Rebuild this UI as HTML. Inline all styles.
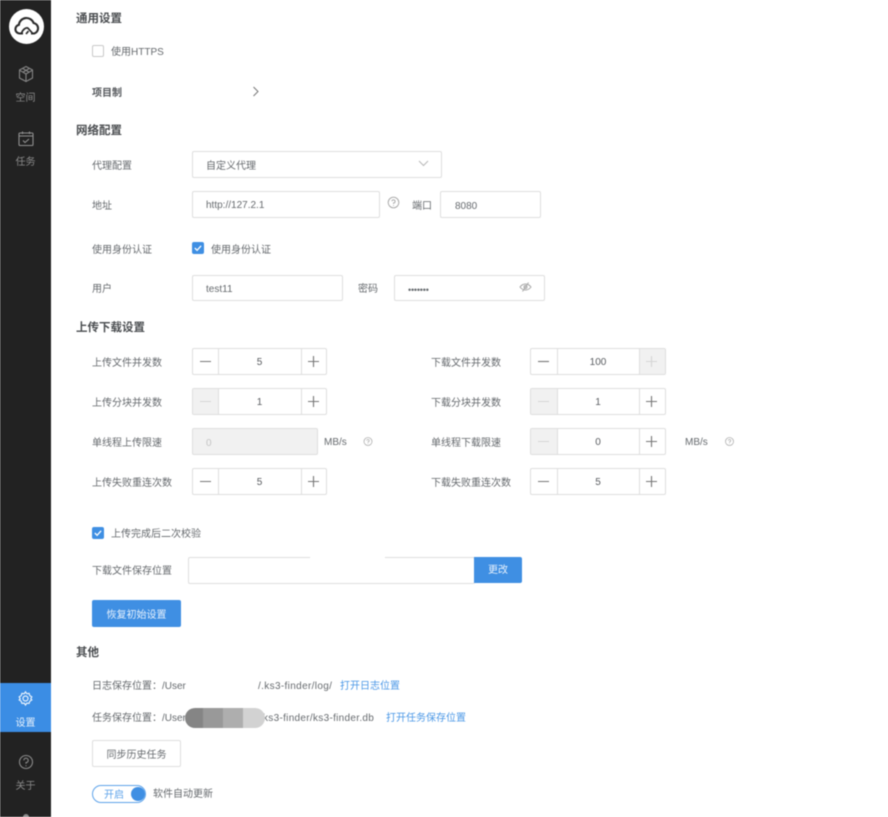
<!DOCTYPE html>
<html lang="zh">
<head>
<meta charset="utf-8">
<style>
html,body{margin:0;padding:0;background:#fff}
body{width:888px;height:817px;overflow:hidden;position:relative;font-family:"Liberation Sans","Noto Sans CJK SC",sans-serif;font-size:10px;color:#666a6e}
#page{position:absolute;left:0;top:0;width:888px;height:817px;overflow:hidden;filter:blur(.5px)}
#page div,#page span.a,#page svg{position:absolute}
.t{white-space:nowrap;line-height:14px;height:14px;margin-top:2px}
.h{white-space:nowrap;font-size:11.5px;font-weight:700;color:#4a4d50;line-height:16px;left:76px;margin-top:1px}
.b{box-sizing:border-box;border:1.5px solid #dedede;border-radius:2px;background:#fff}
.d{background:#f1f1f1}
.ct{text-align:center;line-height:28px;color:#5a5d61}
.side{left:0;width:51px;text-align:center;color:#8b8b8b;line-height:14px;font-size:10px}
.btn{text-align:center;line-height:24px}
.ck{box-sizing:border-box;width:12px;height:12px;border-radius:2px;background:#3f8fe3}
</style>
</head>
<body>
<div id="page">
<div style="left:-4px;top:-4px;width:55px;height:825px;background:#222"></div>
<div style="left:9px;top:9px;width:35px;height:35px;border-radius:50%;background:#fff"></div>
<svg style="left:9px;top:9px" width="35" height="35" viewBox="0 0 35 35" fill="none" stroke="#2a2a2a" stroke-width="2.1"><path d="M14 24.5H10.5a4.4 4.4 0 0 1-.6-8.7A7.6 7.6 0 0 1 24.6 14a5.4 5.4 0 0 1 .6 10.5H22"/><path d="M12.5 24c1.5-3.8 5-6 6.5-4.8l5 5.6M17 25l2.5-3" stroke-width="1.7"/></svg>
<svg style="left:17px;top:65px" width="18" height="18" viewBox="0 0 18 18" fill="none" stroke="#858585" stroke-width="1.1"><path d="M9 1.5 15.5 5v8L9 16.5 2.5 13V5ZM2.5 5.2 9 9l6.5-3.8M9 9v7.5M5.500 3.400l6.500 3.700M12.500 3.400 6 7.100"/></svg>
<div class="side t" style="top:90px">空间</div>
<svg style="left:17px;top:130px" width="18" height="18" viewBox="0 0 18 18" fill="none" stroke="#909090" stroke-width="1.1"><rect x="2" y="3" width="14" height="12.500" rx="1"/><path d="M2 6h14M5.500 1.500v2.500M12.500 1.500v2.500M6 10.500l2 2 4-3.500"/></svg>
<div class="side t" style="top:154px">任务</div>
<div style="left:-4px;top:683px;width:55px;height:49px;background:#3b8de4"></div>
<svg style="left:17px;top:690px" width="17" height="17" viewBox="0 0 17 17" fill="none" stroke="#e8f2fd" stroke-width="1.200"><path d="M8.500 1.800l1.300 1.900 2.300-.3.700 2.200 2 1.200-1 2.100 1 1-2 1.300-.7 2.200-2.300-.3-1.300 1.900-1.300-1.900-2.300.3-.7-2.200-2-1.300 1-1-1-2.100 2-1.200.7-2.200 2.300.3Z"/><circle cx="8.500" cy="8.500" r="2.500"/></svg>
<div class="side t" style="top:715px;color:#e8f2fd">设置</div>
<svg style="left:18px;top:754px" width="16" height="16" viewBox="0 0 16 16" fill="none" stroke="#8b8b8b" stroke-width="1.100"><circle cx="8" cy="8" r="6.500"/><path d="M5.800 6.300A2.200 2.200 0 1 1 8 8.600v1.200M8 11.200v1"/></svg>
<div class="side t" style="top:778px">关于</div>
<div style="left:23px;top:814px;width:6px;height:6px;border-radius:50%;background:#8b8b8b"></div>

<div class="h" style="top:10px">通用设置</div>
<div class="b" style="left:92px;top:45px;width:12px;height:12px;border-color:#c9c9c9"></div>
<div class="t" style="left:111px;top:44px">使用HTTPS</div>
<div class="t" style="left:92px;top:85px;font-weight:700;color:#55585c">项目制</div>
<svg style="left:252px;top:86px" width="8" height="11" viewBox="0 0 8 11" fill="none" stroke="#777" stroke-width="1"><path d="M1.500 1l4.500 4.500L1.500 10"/></svg>

<div class="h" style="top:122px">网络配置</div>
<div class="t" style="left:92px;top:158px">代理配置</div>
<div class="b" style="left:192px;top:151px;width:250px;height:27px"></div>
<div class="t" style="left:206px;top:158px">自定义代理</div>
<svg style="left:418px;top:160px" width="11" height="7" viewBox="0 0 11 7" fill="none" stroke="#b8b8b8" stroke-width="1"><path d="M1 1l4.500 4.500L10 1"/></svg>
<div class="t" style="left:92px;top:198px">地址</div>
<div class="b" style="left:192px;top:191px;width:188px;height:27px"></div>
<div class="t" style="left:206px;top:197px">http://127.2.1</div>
<svg style="left:387px;top:196px" width="13" height="13" viewBox="0 0 13 13" fill="none" stroke="#a5a5a5" stroke-width=".9"><circle cx="6.500" cy="6.500" r="5.300"/><path d="M4.900 5.200a1.600 1.600 0 1 1 1.600 1.800v.9M6.500 9v.8"/></svg>
<div class="t" style="left:412px;top:198px">端口</div>
<div class="b" style="left:440px;top:191px;width:101px;height:27px"></div>
<div class="t" style="left:455px;top:198px">8080</div>
<div class="t" style="left:92px;top:242px">使用身份认证</div>
<div class="ck" style="left:192px;top:242px"></div>
<svg style="left:192px;top:242px" width="12" height="12" viewBox="0 0 12 12" fill="none" stroke="#fff" stroke-width="1.300"><path d="M2.800 6l2.300 2.300 4-4.500"/></svg>
<div class="t" style="left:211px;top:242px">使用身份认证</div>
<div class="t" style="left:92px;top:281px">用户</div>
<div class="b" style="left:192px;top:275px;width:151px;height:26px"></div>
<div class="t" style="left:206px;top:281px">test11</div>
<div class="t" style="left:358px;top:281px">密码</div>
<div class="b" style="left:394px;top:275px;width:151px;height:26px"></div>
<div class="t" style="left:408px;top:281px;font-size:9px;letter-spacing:-.2px">•••••••</div>
<svg style="left:519px;top:281px" width="13" height="12" viewBox="0 0 13 12" fill="none" stroke="#a8a8a8" stroke-width="1"><path d="M1 6c3-4 8-4 11 0-3 4-8 4-11 0ZM3.500 10.500l6-9"/><circle cx="6.500" cy="6" r="1.500"/></svg>

<div class="h" style="top:319px">上传下载设置</div>

<div class="t" style="left:92px;top:355px">上传文件并发数</div>
<div class="t" style="left:92px;top:395px">上传分块并发数</div>
<div class="t" style="left:92px;top:435px">单线程上传限速</div>
<div class="t" style="left:92px;top:475px">上传失败重连次数</div>
<div class="t" style="left:431px;top:355px">下载文件并发数</div>
<div class="t" style="left:431px;top:395px">下载分块并发数</div>
<div class="t" style="left:431px;top:435px">单线程下载限速</div>
<div class="t" style="left:431px;top:475px">下载失败重连次数</div>

<!-- left steppers -->
<div class="b ct" style="left:192px;top:348px;width:135px;height:27px">5</div>
<div class="b ct" style="left:192px;top:388px;width:135px;height:27px">1</div>
<div class="b d" style="left:192px;top:428px;width:126px;height:27px"></div>
<div class="t" style="left:206px;top:435px;color:#c4c4c4">0</div>
<div class="t" style="left:324px;top:434px">MB/s</div>
<div class="b ct" style="left:192px;top:468px;width:135px;height:27px">5</div>
<div class="d" style="left:193px;top:389px;width:25px;height:25px"></div>
<div style="left:218px;top:348px;width:1.400px;height:27px;background:#dedede"></div>
<div style="left:301px;top:348px;width:1.400px;height:27px;background:#dedede"></div>
<div style="left:218px;top:388px;width:1.400px;height:27px;background:#dedede"></div>
<div style="left:301px;top:388px;width:1.400px;height:27px;background:#dedede"></div>
<div style="left:218px;top:468px;width:1.400px;height:27px;background:#dedede"></div>
<div style="left:301px;top:468px;width:1.400px;height:27px;background:#dedede"></div>
<!-- right steppers -->
<div class="b ct" style="left:530px;top:348px;width:136px;height:27px">100</div>
<div class="b ct" style="left:530px;top:388px;width:136px;height:27px">1</div>
<div class="b ct" style="left:530px;top:428px;width:136px;height:27px">0</div>
<div class="t" style="left:685px;top:434px">MB/s</div>
<div class="b ct" style="left:530px;top:468px;width:136px;height:27px">5</div>
<div class="d" style="left:640px;top:349px;width:25px;height:25px"></div>
<div class="d" style="left:531px;top:389px;width:26px;height:25px"></div>
<div class="d" style="left:531px;top:429px;width:26px;height:25px"></div>
<div style="left:557px;top:348px;width:1.400px;height:27px;background:#dedede"></div>
<div style="left:639px;top:348px;width:1.400px;height:27px;background:#dedede"></div>
<div style="left:557px;top:388px;width:1.400px;height:27px;background:#dedede"></div>
<div style="left:639px;top:388px;width:1.400px;height:27px;background:#dedede"></div>
<div style="left:557px;top:428px;width:1.400px;height:27px;background:#dedede"></div>
<div style="left:639px;top:428px;width:1.400px;height:27px;background:#dedede"></div>
<div style="left:557px;top:468px;width:1.400px;height:27px;background:#dedede"></div>
<div style="left:639px;top:468px;width:1.400px;height:27px;background:#dedede"></div>

<svg style="left:0;top:0" width="888" height="817" fill="none" stroke-width="1.100">
<g stroke="#777">
<path d="M200 361.500h11M308 361.500h11M313.500 356v11"/>
<path d="M308 401.500h11M313.500 396v11"/>
<path d="M200 481.500h11M308 481.500h11M313.500 476v11"/>
<path d="M538 361.500h11"/>
<path d="M646 401.500h11M651.500 396v11"/>
<path d="M646 441.500h11M651.500 436v11"/>
<path d="M538 481.500h11M646 481.500h11M651.500 476v11"/>
</g>
<g stroke="#d6d6d6">
<path d="M200 401.500h11M646 361.500h11M651.500 356v11M538 401.500h11M538 441.500h11"/>
</g>
<g stroke="#b0b0b0" stroke-width=".8">
<circle cx="368" cy="441.500" r="4"/><path d="M366.800 440.600a1.200 1.200 0 1 1 1.200 1.300v.6M368 443.300v.6"/>
<circle cx="729.500" cy="441.500" r="4"/><path d="M728.300 440.600a1.200 1.200 0 1 1 1.200 1.300v.6M729.500 443.300v.6"/>
</g>
</svg>

<div class="ck" style="left:92px;top:527px"></div>
<svg style="left:92px;top:527px" width="12" height="12" viewBox="0 0 12 12" fill="none" stroke="#fff" stroke-width="1.300"><path d="M2.800 6l2.300 2.300 4-4.500"/></svg>
<div class="t" style="left:111px;top:526px">上传完成后二次校验</div>
<div class="t" style="left:92px;top:563px">下载文件保存位置</div>
<div class="b" style="left:188px;top:557px;width:287px;height:27px"></div>
<div style="left:310px;top:555px;width:75px;height:5px;background:#fff;border-radius:3px"></div>
<div style="left:474px;top:557px;width:48px;height:26px;background:#3f8fe3;border-radius:0 2px 2px 0"></div>
<div class="t btn" style="left:474px;top:562px;width:48px;line-height:14px;color:#e8f2fd">更改</div>
<div style="left:92px;top:600px;width:89px;height:27px;background:#3f8fe3;border-radius:2px"></div>
<div class="t" style="left:92px;top:607px;width:89px;text-align:center;color:#e8f2fd">恢复初始设置</div>

<div class="h" style="top:644px">其他</div>
<div class="t" style="left:92px;top:678px">日志保存位置：/User</div>
<div class="t" style="left:258px;top:678px;letter-spacing:.35px">/.ks3-finder/log/</div>
<div class="t" style="left:340px;top:678px;color:#4a97e6">打开日志位置</div>
<div class="t" style="left:92px;top:710px">任务保存位置：/User</div>
<div class="t" style="left:263px;top:710px;letter-spacing:.3px">ks3-finder/ks3-finder.db</div>
<div class="t" style="left:386px;top:710px;color:#4a97e6">打开任务保存位置</div>
<div style="left:185px;top:708px;width:80px;height:20px;border-radius:10px;overflow:hidden;background:#fff">
  <div style="left:0;top:0;width:18px;height:20px;background:#858585"></div>
  <div style="left:18px;top:0;width:20px;height:20px;background:#999"></div>
  <div style="left:38px;top:0;width:20px;height:20px;background:#aeaeae"></div>
  <div style="left:58px;top:0;width:22px;height:20px;background:#d2d2d2"></div>
</div>
<div class="b" style="left:92px;top:740px;width:89px;height:27px"></div>
<div class="t" style="left:92px;top:747px;width:89px;text-align:center">同步历史任务</div>
<div class="b" style="left:92px;top:785px;width:54px;height:18px;border:1.300px solid #5ea3ea;border-radius:9px"></div>
<div class="t" style="left:104px;top:787px;color:#5ea3ea">开启</div>
<div style="left:131px;top:787px;width:14px;height:14px;border-radius:50%;background:#3f8fe3"></div>
<div class="t" style="left:153px;top:786px">软件自动更新</div>
</div>
</body>
</html>
